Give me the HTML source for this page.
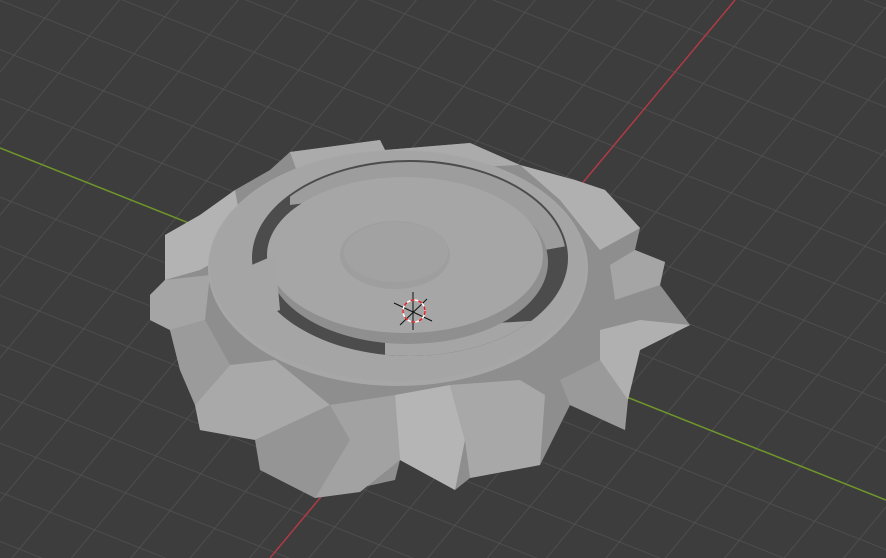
<!DOCTYPE html>
<html><head><style>
html,body{margin:0;padding:0;background:#3d3d3d;width:886px;height:558px;overflow:hidden}
</style></head><body>
<svg width="886" height="558" viewBox="0 0 886 558" xmlns="http://www.w3.org/2000/svg">
<defs>
<pattern id="g" width="48" height="48" patternUnits="userSpaceOnUse" patternTransform="matrix(0.93,0.37,-0.64,0.77,0,0)">
<path d="M0 0H48M0 0V48" stroke="#525252" stroke-width="1.6" fill="none"/>
</pattern>
<clipPath id="br"><polygon points="385,330 385,400 600,400 600,290 560,295 545,320"/></clipPath>
<clipPath id="top"><polygon points="290,120 290,205 330,200 440,190 545,250 600,240 600,120"/></clipPath>
</defs>
<rect width="886" height="558" fill="#3d3d3d"/>
<rect width="886" height="558" fill="url(#g)"/>
<line x1="0" y1="148" x2="886" y2="500" stroke="#6f962a" stroke-width="1.5"/>
<line x1="270" y1="558" x2="735" y2="0" stroke="#b03a45" stroke-width="1.5"/>
<polygon fill="#8e8e8e" points="290,152 380,140 385,150 470,143 520,165 575,180 605,190 640,228 635,250 665,262 660,285 690,325 640,350 630,360 625,430 570,405 540,465 470,478 455,490 400,460 395,480 340,492 315,498 260,440 200,430 195,405 180,370 170,330 150,320 150,295 165,280 165,235 200,215 235,190 270,170"/>
<polygon fill="#a9a9a9" points="195,405 230,365 275,360 330,405 255,440 200,430"/>
<polygon fill="#959595" points="255,440 330,405 350,440 315,498 260,470"/>
<polygon fill="#a2a2a2" points="330,405 395,395 400,460 360,492 315,498 350,440"/>
<polygon fill="#b5b5b5" points="395,395 450,385 465,440 455,490 400,460"/>
<polygon fill="#a8a8a8" points="450,385 520,380 545,395 540,465 470,478 465,440"/>
<polygon fill="#9a9a9a" points="560,380 600,360 628,400 625,430 570,405"/>
<polygon fill="#b0b0b0" points="600,330 640,320 690,325 640,350 628,400 600,360"/>
<polygon fill="#a5a5a5" points="610,265 635,250 665,262 660,285 615,300"/>
<polygon fill="#a5a5a5" points="150,295 165,280 210,275 205,320 170,330 150,320"/>
<polygon fill="#9b9b9b" points="170,330 205,320 230,365 195,405 180,370"/>
<polygon fill="#b3b3b3" points="165,235 200,215 235,190 245,245 200,270 165,280"/>
<polygon fill="#b0b0b0" points="520,165 575,180 605,190 640,228 600,250 560,200"/>
<polygon fill="#ababab" points="290,152 380,140 385,150 470,143 520,165 400,170 300,180"/>
<ellipse cx="398" cy="268" rx="190" ry="118" fill="#a7a7a7"/>
<ellipse cx="398" cy="266" rx="188" ry="115" fill="#a5a5a5"/>
<ellipse cx="410" cy="258" rx="158" ry="98" fill="#4c4c4c"/>
<ellipse cx="410" cy="258" rx="158" ry="98" fill="#a5a5a5" clip-path="url(#br)"/>
<ellipse cx="410" cy="258" rx="156" ry="96" fill="#9d9d9d" clip-path="url(#top)"/>
<ellipse cx="408" cy="262" rx="140" ry="82" fill="#8f8f8f"/>
<ellipse cx="405" cy="255" rx="138" ry="78" fill="#a6a6a6"/>
<polygon fill="#a5a5a5" points="240,270 275,255 280,310 250,320"/>
<ellipse cx="395" cy="255" rx="55" ry="34" fill="#9e9e9e"/>
<ellipse cx="396" cy="252" rx="52" ry="30" fill="#a2a2a2"/>
<g stroke="#111" stroke-width="1">
<line x1="413" y1="292" x2="413" y2="330"/>
<line x1="394" y1="303" x2="432" y2="321"/>
<line x1="400" y1="325" x2="427" y2="299"/>
</g>
<circle cx="414" cy="311" r="11" fill="none" stroke="#fff" stroke-width="1.5"/>
<circle cx="414" cy="311" r="11" fill="none" stroke="#d22" stroke-width="1.5" stroke-dasharray="4 4"/>
</svg>
</body></html>
